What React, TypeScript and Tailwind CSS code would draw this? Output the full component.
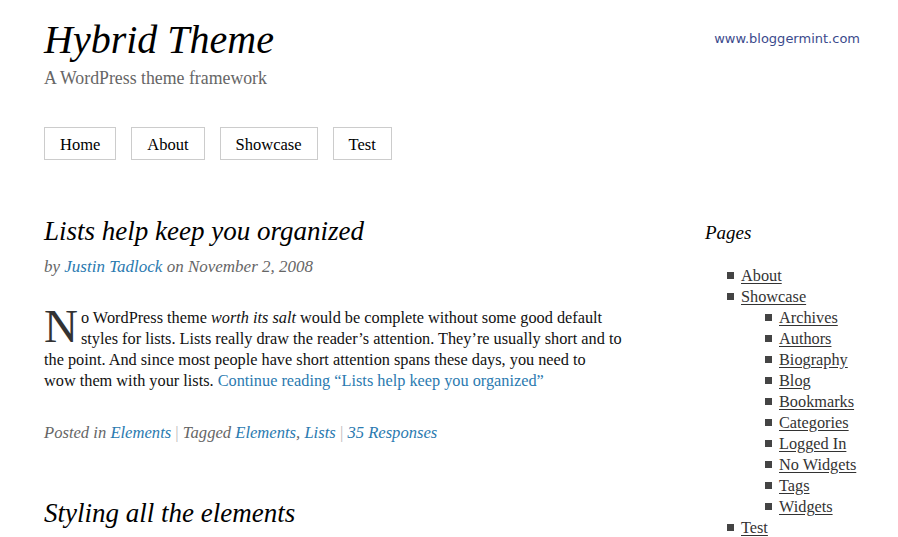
const serif = "font-['Liberation_Serif',serif]";

const navItems = ["Home", "About", "Showcase", "Test"];

const subPages = [
  "Archives",
  "Authors",
  "Biography",
  "Blog",
  "Bookmarks",
  "Categories",
  "Logged In",
  "No Widgets",
  "Tags",
  "Widgets",
];

const Bullet = () => <span className="mr-[7px] inline-block h-[7px] w-[7px] bg-[#444]" />;

const PageLink = ({ label }: { label: string }) => (
  <li className="flex items-center">
    <Bullet />
    <a href="#" className="text-[#333] underline underline-offset-2">
      {label}
    </a>
  </li>
);

export default function App() {
  return (
    <div className={`${serif} min-h-[537px] bg-white text-[#111]`}>
      {/* Header */}
      <div className="flex items-start justify-between pl-[44px] pr-[38px] pt-[17px]">
        <div>
          <h1 className="text-[40px] italic leading-[46px] text-black">Hybrid Theme</h1>
          <p className="mt-[4px] text-[17.8px] leading-[22px] text-[#666]">A WordPress theme framework</p>
        </div>
        <a href="#" className="mt-[12px] font-['DejaVu_Sans',sans-serif] text-[13px] text-[#3b4a8c]">
          www.bloggermint.com
        </a>
      </div>

      {/* Nav */}
      <div className="mt-[38px] flex gap-[15px] pl-[44px]">
        {navItems.map((n) => (
          <a
            key={n}
            href="#"
            className="flex h-[33px] items-center border border-[#ccc] px-[15px] pt-[3px] text-[16.5px] text-black"
          >
            {n}
          </a>
        ))}
      </div>

      <div className="mt-[51px] flex pl-[44px]">
        {/* Main */}
        <div className="w-[585px]">
          <h2 className="text-[27px] italic leading-[40px] text-black">Lists help keep you organized</h2>
          <p className="mt-[3px] text-[17px] italic text-[#666]">
            by <a href="#" className="text-[#2a7ab0]">Justin Tadlock</a> on November 2, 2008
          </p>
          <p className="mt-[27px] text-[16.3px] leading-[21px]">
            <span className="float-left mr-[3px] mt-[3px] text-[47px] leading-[32px] text-[#333]">N</span>o
            WordPress theme <em>worth its salt</em> would be complete without some good default
            <br />
            styles for lists. Lists really draw the reader’s attention. They’re usually short and to
            <br />
            the point. And since most people have short attention spans these days, you need to
            <br />
            wow them with your lists.{" "}
            <a href="#" className="text-[#2a7ab0]">
              Continue reading “Lists help keep you organized”
            </a>
          </p>
          <p className="mt-[30px] text-[16.6px] italic text-[#666]">
            Posted in <a href="#" className="text-[#2a7ab0]">Elements</a> <span className="text-[#bbb] not-italic">|</span>{" "}
            Tagged <a href="#" className="text-[#2a7ab0]">Elements</a>, <a href="#" className="text-[#2a7ab0]">Lists</a>{" "}
            <span className="text-[#bbb] not-italic">|</span> <a href="#" className="text-[#2a7ab0]">35 Responses</a>
          </p>
          <h2 className="mt-[48px] text-[27px] italic leading-[40px] text-black">Styling all the elements</h2>
        </div>

        {/* Sidebar */}
        <div className="ml-[76px] pt-[7px]">
          <h3 className="text-[19px] italic leading-[30px] text-black">Pages</h3>
          <ul className="mt-[17px] pl-[22px] text-[16.3px] leading-[21px]">
            <PageLink label="About" />
            <PageLink label="Showcase" />
            <li>
              <ul className="pl-[38px]">
                {subPages.map((p) => (
                  <PageLink key={p} label={p} />
                ))}
              </ul>
            </li>
            <PageLink label="Test" />
          </ul>
        </div>
      </div>
    </div>
  );
}
